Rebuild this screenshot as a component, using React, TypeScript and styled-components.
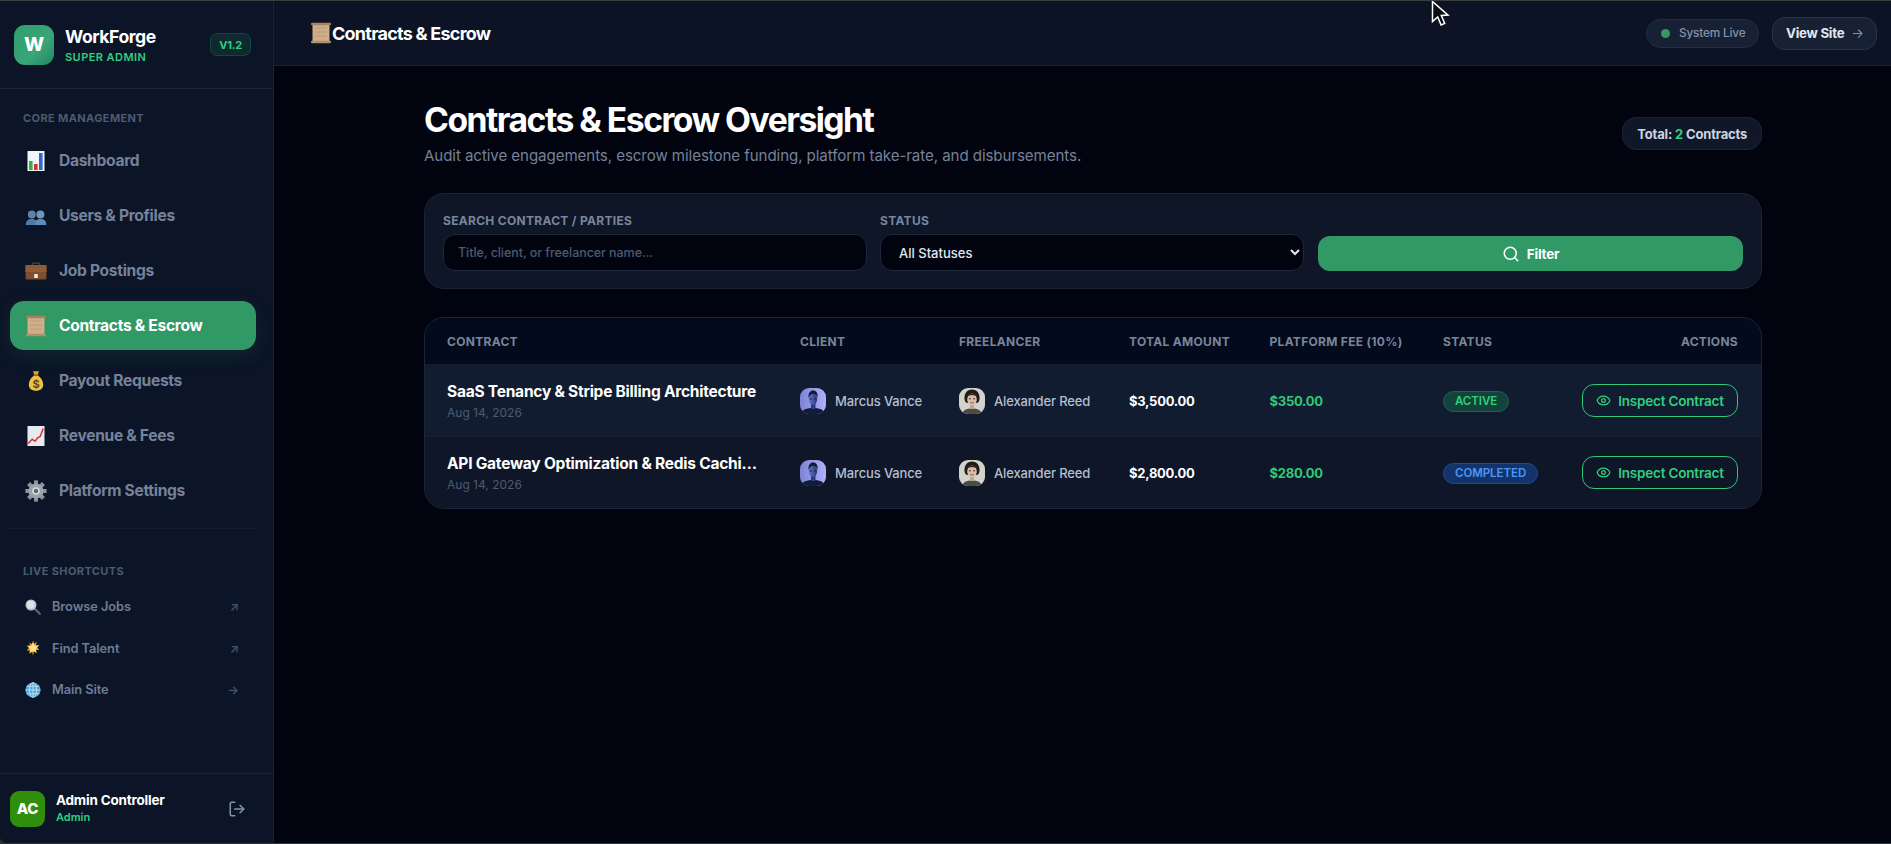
import React from 'react';
import styled, { createGlobalStyle } from 'styled-components';
import { Eye, LogOut, Search } from 'lucide-react';

const Global = createGlobalStyle`
  html, body { margin: 0; padding: 0; background: #2b2f36; }
  * { box-sizing: border-box; }
  body { font-family: Inter, "Liberation Sans", sans-serif; -webkit-font-smoothing: antialiased; }
`;

const Frame = styled.div`
  position: relative;
  width: 1891px;
  height: 844px;
  display: flex;
  overflow: hidden;
  border-top: 1px solid #383d40;
  border-bottom: 1px solid #2c3340;
  border-bottom-left-radius: 8px;
  background: #01040f;
`;

const Sidebar = styled.aside`
  width: 274px;
  flex: none;
  display: flex;
  flex-direction: column;
  background: #0c1527;
  border-right: 1px solid #1a2335;
`;

const Brand = styled.div`
  height: 88px;
  flex: none;
  display: flex;
  align-items: center;
  gap: 11px;
  padding: 0 22px 0 14px;
  border-bottom: 1px solid #1a2335;
`;

const Logo = styled.div`
  width: 40px;
  height: 40px;
  border-radius: 11px;
  display: flex;
  align-items: center;
  justify-content: center;
  background: linear-gradient(135deg, #2f9e6a, #3aa57a 60%, #1f8a63);
  color: #fff;
  font-size: 19px;
  font-weight: 800;
`;

const BrandText = styled.div`
  display: flex;
  flex-direction: column;
  gap: 3px;
`;

const BrandName = styled.div`
  color: #fff;
  font-size: 17.6px;
  line-height: 22px;
  font-weight: 700;
  letter-spacing: -0.025em;
`;

const BrandRole = styled.div`
  color: #2fd07f;
  font-size: 11px;
  line-height: 13px;
  font-weight: 600;
  letter-spacing: 0.04em;
`;

const VersionBadge = styled.div`
  margin-left: auto;
  width: 41px;
  height: 23px;
  border-radius: 7px;
  display: flex;
  align-items: center;
  justify-content: center;
  color: #2fd07f;
  font-size: 11px;
  font-weight: 700;
  letter-spacing: -0.02em;
  background: #0e2a30;
  border: 1px solid #16423f;
`;

const SideBody = styled.div`
  flex: 1;
  padding: 22px 17px 0 10px;
  display: flex;
  flex-direction: column;
`;

const SectionLabel = styled.div<{ $mt?: number }>`
  margin: ${(p) => p.$mt ?? 0}px 0 0 13px;
  color: #4d5a70;
  font-size: 11px;
  line-height: 14px;
  font-weight: 700;
  letter-spacing: 0.035em;
  white-space: nowrap;
`;

const NavList = styled.nav`
  margin-top: 11px;
  display: flex;
  flex-direction: column;
  gap: 6px;
`;

const NavItem = styled.a<{ $active?: boolean }>`
  height: 49px;
  display: flex;
  align-items: center;
  gap: 12px;
  padding-left: 15px;
  border-radius: 14px;
  color: ${(p) => (p.$active ? '#fff' : '#75829a')};
  background: ${(p) => (p.$active ? '#319965' : 'transparent')};
  box-shadow: ${(p) => (p.$active ? '0 6px 18px rgba(49,153,101,.12)' : 'none')};
  font-size: 15.6px;
  font-weight: 700;
  letter-spacing: -0.02em;
`;

const Emoji = styled.svg`
  flex: none;
  display: block;
`;

const Divider = styled.div`
  margin-top: 13px;
  height: 1px;
  background: #161f32;
`;

const ShortList = styled.div`
  margin-top: 10px;
  display: flex;
  flex-direction: column;
  gap: 4px;
`;

const ShortItem = styled.a`
  height: 37.5px;
  display: flex;
  align-items: center;
  gap: 11px;
  padding: 0 17px 0 15px;
  color: #6f7c93;
  font-size: 12.8px;
  font-weight: 600;
  letter-spacing: -0.005em;
`;

const ShortArrow = styled.span`
  margin-left: auto;
  color: #46536a;
  font-size: 12px;
  font-weight: 600;
`;

const UserBar = styled.div`
  height: 70px;
  flex: none;
  display: flex;
  align-items: center;
  gap: 11px;
  padding: 0 27px 0 10px;
  border-top: 1px solid #1a2335;
`;

const UserAvatar = styled.div`
  width: 35px;
  height: 36px;
  flex: none;
  border-radius: 9px;
  display: flex;
  align-items: center;
  justify-content: center;
  color: #fff;
  font-size: 15px;
  font-weight: 800;
  letter-spacing: -0.02em;
  background: #2f8f0c;
`;

const UserText = styled.div`
  display: flex;
  flex-direction: column;
  gap: 1px;
`;

const UserName = styled.div`
  color: #fff;
  font-size: 13.5px;
  line-height: 17px;
  font-weight: 700;
  letter-spacing: -0.015em;
`;

const UserRole = styled.div`
  color: #2fd07f;
  font-size: 11px;
  line-height: 15px;
  font-weight: 600;
`;

const LogoutBtn = styled.span`
  margin-left: auto;
  color: #8492a8;
  display: flex;
`;

const Main = styled.main`
  flex: 1;
  min-width: 0;
  display: flex;
  flex-direction: column;
`;

const TopBar = styled.header`
  height: 65px;
  flex: none;
  display: flex;
  align-items: center;
  padding: 0 14px 0 36px;
  background: #0b1325;
  border-bottom: 1px solid #1a2335;
`;

const TopTitle = styled.div`
  display: flex;
  align-items: center;
  gap: 0;
  color: #fff;
  font-size: 18px;
  font-weight: 700;
  letter-spacing: -0.042em;
`;

const TopActions = styled.div`
  margin-left: auto;
  display: flex;
  align-items: center;
  gap: 13px;
`;

const LivePill = styled.div`
  height: 29px;
  width: 113px;
  display: flex;
  align-items: center;
  gap: 9px;
  padding: 0 0 0 14px;
  border-radius: 15px;
  color: #8492a8;
  font-size: 11.8px;
  font-weight: 500;
  letter-spacing: -0.015em;
  background: #172133;
  border: 1px solid #232e42;
`;

const LiveDot = styled.span`
  width: 9px;
  height: 9px;
  border-radius: 50%;
  background: #319965;
`;

const ViewSite = styled.a`
  height: 33px;
  width: 105px;
  display: flex;
  align-items: center;
  gap: 7px;
  padding: 0 0 0 13px;
  border-radius: 13px;
  color: #e2e8f0;
  font-size: 13.3px;
  font-weight: 700;
  letter-spacing: -0.02em;
  background: #172133;
  border: 1px solid #2a3549;
`;

const ViewArrow = styled.span`
  color: #8492a8;
  font-weight: 400;
`;

const Content = styled.div`
  width: 1338px;
  margin-left: 150px;
  padding-top: 35px;
`;

const PageHead = styled.div`
  display: flex;
  align-items: center;
  justify-content: space-between;
  height: 63px;
`;

const PageTitle = styled.h1`
  margin: 0;
  color: #fff;
  font-size: 33.7px;
  line-height: 40px;
  font-weight: 700;
  letter-spacing: -0.045em;
`;

const PageSub = styled.p`
  margin: 6px 0 0;
  color: #768298;
  font-size: 15.1px;
  line-height: 20px;
  letter-spacing: -0.005em;
`;

const TotalPill = styled.div`
  height: 33px;
  margin-top: 2px;
  display: flex;
  align-items: center;
  padding: 0 14px;
  border-radius: 14px;
  color: #cbd5e1;
  font-size: 13px;
  font-weight: 700;
  letter-spacing: -0.015em;
  background: #0f1729;
  border: 1px solid #1b2538;
`;

const TotalNum = styled.span`
  color: #2fd07f;
  margin: 0 3px;
`;

const FilterCard = styled.section`
  margin-top: 29px;
  height: 96px;
  padding: 0 18px;
  display: grid;
  grid-template-columns: 424px 425px 1fr;
  gap: 13px;
  border-radius: 20px;
  background: #0e1628;
  border: 1px solid #1b2538;
`;

const Field = styled.div`
  padding-top: 19px;
  display: flex;
  flex-direction: column;
  gap: 6px;
`;

const FieldLabel = styled.label`
  color: #78859b;
  font-size: 12px;
  line-height: 15px;
  font-weight: 700;
  letter-spacing: 0.025em;
`;

const SearchInput = styled.input`
  height: 37px;
  width: 100%;
  padding: 0 14px;
  border-radius: 12px;
  color: #fff;
  font: 500 12.5px Inter, sans-serif;
  letter-spacing: -0.005em;
  background: #01040f;
  border: 1px solid #1e283c;
  outline: none;
  &::placeholder { color: #4d5a70; opacity: 1; }
`;

const StatusSelect = styled.select`
  height: 37px;
  width: 424px;
  padding: 0 14px;
  border-radius: 12px;
  color: #e2e8f0;
  font: 500 13px Inter, sans-serif;
  color-scheme: dark;
  background: #01040f;
  border: 1px solid #1e283c;
  outline: none;
`;

const FilterBtnWrap = styled.div`
  padding-top: 42px;
`;

const FilterBtn = styled.button`
  width: 100%;
  height: 35px;
  display: flex;
  align-items: center;
  justify-content: center;
  gap: 7px;
  border: 0;
  border-radius: 12px;
  color: #fff;
  font: 700 13.5px Inter, sans-serif;
  letter-spacing: -0.015em;
  background: #319965;
`;

const TableCard = styled.section`
  margin-top: 28px;
  border-radius: 20px;
  overflow: hidden;
  border: 1px solid #1b2538;
  background: #0e1628;
`;

const COLS = '353px 159px 170px 140.5px 173.5px 130px 1fr';

const HeadRow = styled.div`
  height: 47px;
  display: grid;
  grid-template-columns: ${COLS};
  align-items: center;
  padding: 0 23px 0 22px;
  background: #030a1b;
  border-bottom: 1px solid #172033;
`;

const HeadCell = styled.div<{ $right?: boolean }>`
  color: #78859b;
  font-size: 12px;
  font-weight: 700;
  letter-spacing: 0.025em;
  text-align: ${(p) => (p.$right ? 'right' : 'left')};
  white-space: nowrap;
`;

const Row = styled.div<{ $first?: boolean }>`
  height: ${(p) => (p.$first ? 72 : 71)}px;
  display: grid;
  grid-template-columns: ${COLS};
  align-items: center;
  padding: 0 23px 0 22px;
  background: ${(p) => (p.$first ? '#121c30' : '#0e1628')};
  border-bottom: ${(p) => (p.$first ? '1px solid #172033' : '0')};
`;

const ContractCell = styled.div`
  display: flex;
  flex-direction: column;
  gap: 4px;
  min-width: 0;
`;

const ContractTitle = styled.div`
  color: #fff;
  font-size: 15.5px;
  line-height: 19px;
  font-weight: 700;
  letter-spacing: -0.015em;
  width: 314px;
  white-space: nowrap;
  overflow: hidden;
  text-overflow: ellipsis;
`;

const ContractDate = styled.div`
  color: #4d5a70;
  font-size: 12px;
  line-height: 15px;
`;

const Party = styled.div`
  display: flex;
  align-items: center;
  gap: 9px;
  color: #b4bfcf;
  font-size: 13px;
  font-weight: 500;
  letter-spacing: -0.01em;
`;

const PortraitWrap = styled.span`
  width: 26px;
  height: 26px;
  flex: none;
  border-radius: 9px;
  overflow: hidden;
  display: block;
`;

const Amount = styled.div`
  color: #fff;
  font-size: 13px;
  font-weight: 700;
  letter-spacing: -0.02em;
`;

const Fee = styled.div`
  color: #2fc878;
  font-size: 13px;
  font-weight: 700;
  letter-spacing: -0.02em;
`;

const Badge = styled.span<{ $tone: 'green' | 'blue' }>`
  display: inline-flex;
  align-items: center;
  height: 21px;
  padding: 0 11px;
  border-radius: 11px;
  font-size: 11.5px;
  font-weight: 600;
  letter-spacing: -0.005em;
  color: ${(p) => (p.$tone === 'green' ? '#2fd07f' : '#4b96f8')};
  background: ${(p) => (p.$tone === 'green' ? '#14433c' : '#12346a')};
  border: 1px solid ${(p) => (p.$tone === 'green' ? '#1d6350' : '#1b4d96')};
`;

const ActionCell = styled.div`
  display: flex;
  justify-content: flex-end;
`;

const InspectBtn = styled.a`
  width: 156px;
  height: 33px;
  display: flex;
  align-items: center;
  justify-content: center;
  gap: 7px;
  border-radius: 12px;
  color: #2fd07f;
  font-size: 13.5px;
  font-weight: 600;
  letter-spacing: -0.015em;
  border: 1px solid #2fc878;
`;

const Cursor = styled.svg`
  position: absolute;
  left: 1430px;
  top: -1px;
  pointer-events: none;
`;

const ChartIcon = ({ s = 22 }: { s?: number }) => (
  <Emoji width={s} height={s} viewBox="0 0 22 22">
    <rect x="2.5" y="1" width="17" height="20" fill="#f1f4f8" />
    <rect x="4" y="11" width="3.6" height="9" fill="#2eb34a" />
    <rect x="9" y="14" width="3.6" height="6" fill="#d5322e" />
    <rect x="14" y="3" width="3.6" height="17" fill="#3366cc" />
  </Emoji>
);

const BustsIcon = ({ s = 22 }: { s?: number }) => (
  <Emoji width={s} height={s} viewBox="0 0 22 22">
    <circle cx="6.8" cy="9.5" r="4" fill="#5a83ad" />
    <path d="M0.8 20c0-4.4 2.4-6 6-6s5.600 1.600 5.600 6z" fill="#4f7ba8" />
    <circle cx="15.4" cy="9.5" r="4" fill="#6d97c1" />
    <path d="M10 20c0-4.4 1.800-6 5.400-6s6 1.600 6 6z" fill="#5f8cb8" />
  </Emoji>
);

const CaseIcon = ({ s = 22 }: { s?: number }) => (
  <Emoji width={s} height={s} viewBox="0 0 22 22">
    <path d="M7.5 5V3.2h7V5" fill="none" stroke="#4f3a2c" strokeWidth="1.6" />
    <rect x="0.5" y="5" width="21" height="14.5" rx="1.6" fill="#7d4f2e" />
    <rect x="0.5" y="5" width="21" height="7" fill="#8f5c36" />
    <rect x="9.2" y="14" width="3.6" height="4" fill="#efe9de" />
  </Emoji>
);

const ScrollIcon = ({ s = 22 }: { s?: number }) => (
  <Emoji width={s} height={s} viewBox="0 0 22 22">
    <rect x="2.5" y="1.5" width="17" height="19" fill="#cfae8a" />
    <rect x="1" y="0.8" width="20" height="2.4" rx="1" fill="#a5845f" />
    <rect x="1" y="18.8" width="20" height="2.4" rx="1" fill="#b18f69" />
    <path d="M5 6h12M5 10h12M5 14h12" stroke="#c09c76" strokeWidth="1" />
  </Emoji>
);

const BagIcon = ({ s = 22 }: { s?: number }) => (
  <Emoji width={s} height={s} viewBox="0 0 22 22">
    <path d="M8 1.2h6l-1.4 4h-3.2z" fill="#d8a531" />
    <path d="M9 5.4h4c3.4 2.4 5.200 6 5.200 9.400 0 3.800-2.800 6-7.200 6s-7.200-2.200-7.200-6c0-3.400 1.800-7 5.200-9.400z" fill="#f0bf45" />
    <rect x="8.6" y="4.4" width="4.8" height="1.4" fill="#8c6a20" />
    <text x="11" y="18" textAnchor="middle" fontSize="11" fontWeight="700" fill="#5c4a18" fontFamily="Inter">$</text>
  </Emoji>
);

const TrendIcon = ({ s = 22 }: { s?: number }) => (
  <Emoji width={s} height={s} viewBox="0 0 22 22">
    <rect x="2.5" y="1" width="17" height="20" fill="#e6eaf0" />
    <path d="M3.2 18.500l4-4.200 3 2 2.400-3.400 2.600-1.400 3-8" fill="none" stroke="#d5322e" strokeWidth="1.5" />
  </Emoji>
);

const GearIcon = ({ s = 22 }: { s?: number }) => {
  const teeth = [0, 45, 90, 135, 180, 225, 270, 315];
  return (
    <Emoji width={s} height={s} viewBox="0 0 22 22">
      {teeth.map((a) => (
        <rect key={a} x="9" y="0.6" width="4" height="20.8" fill="#8a929c" transform={`rotate(${a} 11 11)`} />
      ))}
      <circle cx="11" cy="11" r="7.6" fill="#9aa2ac" />
      <circle cx="11" cy="11" r="3.8" fill="#d7dbe0" />
      <circle cx="11" cy="11" r="2.2" fill="#5f666f" />
    </Emoji>
  );
};

const LensIcon = ({ s = 16 }: { s?: number }) => (
  <Emoji width={s} height={s} viewBox="0 0 16 16">
    <path d="M9.500 9.500l5.300 5.300" stroke="#5f6670" strokeWidth="2.2" strokeLinecap="round" />
    <circle cx="6" cy="6" r="5.500" fill="#b6bec8" />
    <circle cx="5.700" cy="5.700" r="4" fill="#dde2e8" />
  </Emoji>
);

const StarIcon = ({ s = 16 }: { s?: number }) => (
  <Emoji width={s} height={s} viewBox="0 0 16 16">
    <path d="M8 0.500l1 3.200 2.800-1.600-1 3 3.600-.2-2.400 2.500 2.400 2.600-3.400-.1.800 3.400-2.900-1.900L8 15.500l-.9-3.600-2.900 1.900.8-3.400-3.400.1 2.400-2.600L1.600 5.400l3.600.2-1-3 2.800 1.600z" fill="#f6a623" />
    <path d="M8 2.600l1.600 3.400 3.600.4-2.600 2.500.7 3.600L8 10.800l-3.300 1.700.7-3.600-2.600-2.500 3.600-.4z" fill="#ffe58a" />
  </Emoji>
);

const GlobeIcon = ({ s = 16 }: { s?: number }) => (
  <Emoji width={s} height={s} viewBox="0 0 16 16">
    <circle cx="8" cy="8" r="7.6" fill="#57a5d8" />
    <g fill="none" stroke="#c4e2f2" strokeWidth="0.9">
      <ellipse cx="8" cy="8" rx="3.6" ry="7.4" />
      <path d="M8 0.600v14.800M0.600 8h14.800M1.800 4.200h12.400M1.800 11.800h12.400" />
    </g>
  </Emoji>
);

const MarcusFace = () => (
  <svg width="26" height="26" viewBox="0 0 26 26" style={{ display: 'block' }}>
    <defs>
      <linearGradient id="mbg" x1="0" x2="1" y1="0" y2="0">
        <stop offset="0" stopColor="#7d82d6" />
        <stop offset="1" stopColor="#aeb2f8" />
      </linearGradient>
      <linearGradient id="mface" x1="0" x2="1" y1="0" y2="0">
        <stop offset="0" stopColor="#6477c4" />
        <stop offset="1" stopColor="#2a3a78" />
      </linearGradient>
    </defs>
    <rect width="26" height="26" fill="url(#mbg)" />
    <path d="M1 26c1-4.500 6-6 12-6s11 1.500 12 6z" fill="#0f1c3a" />
    <rect x="11" y="15" width="4.500" height="6" fill="#2c3c80" />
    <ellipse cx="13" cy="11" rx="4.200" ry="6" fill="url(#mface)" />
    <path d="M8.500 10c-.5-5 1.800-7.500 4.700-7.500S18 5 17.500 9.500c-1-2.800-2.700-3.800-4.500-3.800S9.500 7.500 8.500 10z" fill="#121a30" />
    <path d="M9.800 11h2.200M14 11h2" stroke="#141d42" strokeWidth="0.9" />
  </svg>
);

const ReedFace = () => (
  <svg width="26" height="26" viewBox="0 0 26 26" style={{ display: 'block' }}>
    <rect width="26" height="26" fill="#d2d3cd" />
    <path d="M3 26c1-4 4.500-5.500 10-5.500s9 1.500 10 5.500z" fill="#4c4c3e" />
    <rect x="11" y="16" width="4" height="5" fill="#bfa48e" />
    <path d="M5.500 11C5 4.500 9 1.500 13 1.500S21 4.500 20.500 11c-.2 2.500-1.800 4-2.500 4H8c-.7 0-2.300-1.500-2.500-4z" fill="#231b17" />
    <ellipse cx="13" cy="11.500" rx="4.800" ry="6" fill="#d8bda8" />
    <path d="M8.200 8.500c1-2.500 2.900-3.300 4.800-3.300s3.800.8 4.800 3.300c-1.500-1-3-1.300-4.800-1.300s-3.300.3-4.800 1.300z" fill="#3a2c24" />
    <path d="M10 10.800h1.800M14.200 10.800H16" stroke="#33251e" strokeWidth="1" />
    <path d="M11.300 14.800h3.400" stroke="#8e5a50" strokeWidth="1" />
  </svg>
);

const NAV = [
  { label: 'Dashboard', Icon: ChartIcon },
  { label: 'Users & Profiles', Icon: BustsIcon },
  { label: 'Job Postings', Icon: CaseIcon },
  { label: 'Contracts & Escrow', Icon: ScrollIcon, active: true },
  { label: 'Payout Requests', Icon: BagIcon },
  { label: 'Revenue & Fees', Icon: TrendIcon },
  { label: 'Platform Settings', Icon: GearIcon },
];

const SHORTCUTS = [
  { label: 'Browse Jobs', Icon: LensIcon, arrow: '↗' },
  { label: 'Find Talent', Icon: StarIcon, arrow: '↗' },
  { label: 'Main Site', Icon: GlobeIcon, arrow: '→' },
];

const CONTRACTS = [
  { title: 'SaaS Tenancy & Stripe Billing Architecture', amount: '$3,500.00', fee: '$350.00', status: 'ACTIVE', tone: 'green' as const },
  { title: 'API Gateway Optimization & Redis Caching Layer', amount: '$2,800.00', fee: '$280.00', status: 'COMPLETED', tone: 'blue' as const },
];

export default function App() {
  return (
    <>
      <Global />
      <Frame>
        <Sidebar>
          <Brand>
            <Logo>W</Logo>
            <BrandText>
              <BrandName>WorkForge</BrandName>
              <BrandRole>SUPER ADMIN</BrandRole>
            </BrandText>
            <VersionBadge>V1.2</VersionBadge>
          </Brand>
          <SideBody>
            <SectionLabel>CORE MANAGEMENT</SectionLabel>
            <NavList>
              {NAV.map(({ label, Icon, active }) => (
                <NavItem key={label} $active={active}>
                  <Icon />
                  {label}
                </NavItem>
              ))}
            </NavList>
            <Divider />
            <SectionLabel $mt={35}>LIVE SHORTCUTS</SectionLabel>
            <ShortList>
              {SHORTCUTS.map(({ label, Icon, arrow }) => (
                <ShortItem key={label}>
                  <Icon />
                  {label}
                  <ShortArrow>{arrow}</ShortArrow>
                </ShortItem>
              ))}
            </ShortList>
          </SideBody>
          <UserBar>
            <UserAvatar>AC</UserAvatar>
            <UserText>
              <UserName>Admin Controller</UserName>
              <UserRole>Admin</UserRole>
            </UserText>
            <LogoutBtn>
              <LogOut size={18} />
            </LogoutBtn>
          </UserBar>
        </Sidebar>
        <Main>
          <TopBar>
            <TopTitle>
              <ScrollIcon />
              Contracts &amp; Escrow
            </TopTitle>
            <TopActions>
              <LivePill>
                <LiveDot />
                System Live
              </LivePill>
              <ViewSite>
                View Site
                <ViewArrow>→</ViewArrow>
              </ViewSite>
            </TopActions>
          </TopBar>
          <Content>
            <PageHead>
              <div>
                <PageTitle>Contracts &amp; Escrow Oversight</PageTitle>
                <PageSub>Audit active engagements, escrow milestone funding, platform take-rate, and disbursements.</PageSub>
              </div>
              <TotalPill>
                Total:<TotalNum>2</TotalNum>Contracts
              </TotalPill>
            </PageHead>
            <FilterCard>
              <Field>
                <FieldLabel>SEARCH CONTRACT / PARTIES</FieldLabel>
                <SearchInput placeholder="Title, client, or freelancer name..." />
              </Field>
              <Field>
                <FieldLabel>STATUS</FieldLabel>
                <StatusSelect defaultValue="all">
                  <option value="all">All Statuses</option>
                </StatusSelect>
              </Field>
              <FilterBtnWrap>
                <FilterBtn>
                  <Search size={18} />
                  Filter
                </FilterBtn>
              </FilterBtnWrap>
            </FilterCard>
            <TableCard>
              <HeadRow>
                <HeadCell>CONTRACT</HeadCell>
                <HeadCell>CLIENT</HeadCell>
                <HeadCell>FREELANCER</HeadCell>
                <HeadCell>TOTAL AMOUNT</HeadCell>
                <HeadCell>PLATFORM FEE (10%)</HeadCell>
                <HeadCell>STATUS</HeadCell>
                <HeadCell $right>ACTIONS</HeadCell>
              </HeadRow>
              {CONTRACTS.map((c, i) => (
                <Row key={c.title} $first={i === 0}>
                  <ContractCell>
                    <ContractTitle>{c.title}</ContractTitle>
                    <ContractDate>Aug 14, 2026</ContractDate>
                  </ContractCell>
                  <Party>
                    <PortraitWrap><MarcusFace /></PortraitWrap>
                    Marcus Vance
                  </Party>
                  <Party>
                    <PortraitWrap><ReedFace /></PortraitWrap>
                    Alexander Reed
                  </Party>
                  <Amount>{c.amount}</Amount>
                  <Fee>{c.fee}</Fee>
                  <div><Badge $tone={c.tone}>{c.status}</Badge></div>
                  <ActionCell>
                    <InspectBtn>
                      <Eye size={15} />
                      Inspect Contract
                    </InspectBtn>
                  </ActionCell>
                </Row>
              ))}
            </TableCard>
          </Content>
        </Main>
        <Cursor width="22" height="30" viewBox="0 0 22 30">
          <path d="M2.500 1.500v20l5.200-4.600 3.400 8 3.600-1.500-3.400-7.900 6.700-.4z" fill="#0b0d12" stroke="#fff" strokeWidth="1.500" />
        </Cursor>
      </Frame>
    </>
  );
}
